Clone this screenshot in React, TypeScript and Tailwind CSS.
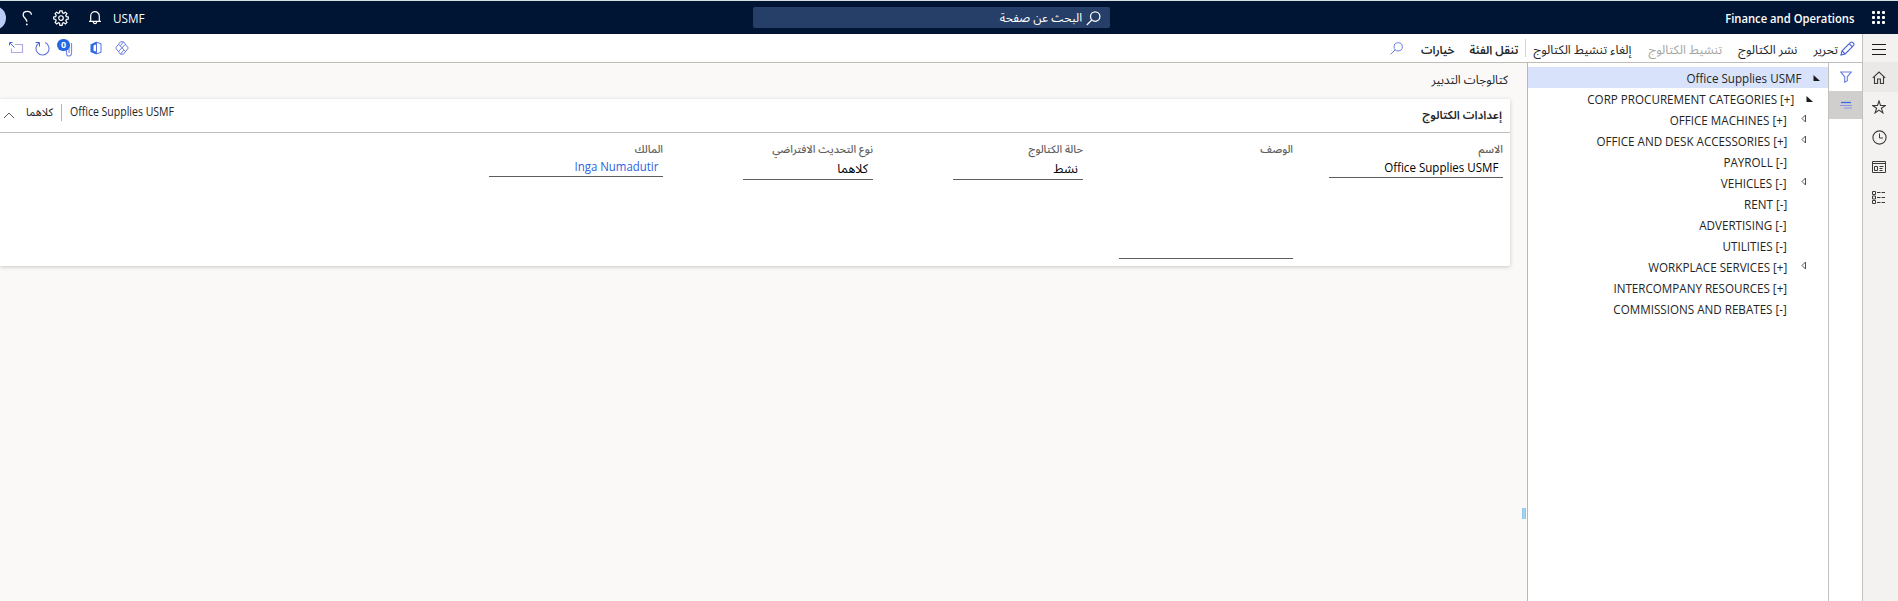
import React from "react";

type IconProps = { className?: string };

const Svg = ({ w, h, className = "", children }: { w: number; h: number; className?: string; children: React.ReactNode }) => (
  <svg width={w} height={h} viewBox={`0 0 ${w} ${h}`} fill="none" stroke="currentColor" strokeWidth={1} className={`block shrink-0 ${className}`}>
    {children}
  </svg>
);

const Waffle = () => (
  <Svg w={15} h={15}>
    {[1, 6, 11].map((y) => [1, 6, 11].map((x) => <rect key={`${x}-${y}`} x={x} y={y} width={3} height={3} rx={1} fill="#fff" stroke="none" />))}
  </Svg>
);

const SearchIcon = ({ className }: IconProps) => (
  <Svg w={15} h={15} className={className}>
    <circle cx={9.2} cy={5.6} r={4.7} strokeWidth={1.25} />
    <path d="M5.9 8.9 0.8 14" strokeWidth={1.25} />
  </Svg>
);

const ActionSearchIcon = () => (
  <Svg w={13} h={13}>
    <circle cx={8.2} cy={4.8} r={4.1} />
    <path d="M5.3 7.700.6 12.400" />
  </Svg>
);

const Question = () => (
  <Svg w={12} h={16}>
    <path d="M10.4 4.8C10.4 2.6 8.6 1.4 6.4 1.4S2.2 2.7 2.2 4.9c0 3 3.6 3.2 3.6 6.9" strokeWidth={1.3} />
    <circle cx={5.8} cy={14.4} r={0.9} fill="currentColor" stroke="none" />
  </Svg>
);

const Gear = () => (
  <Svg w={16} h={16}>
    <path d="M6.9.8h2.2l.4 2 1.2.5 1.7-1.1 1.5 1.5-1.1 1.7.5 1.2 2 .4v2.1l-2 .4-.5 1.2 1.1 1.7-1.5 1.5-1.7-1.1-1.2.5-.4 2H6.9l-.4-2-1.2-.5-1.7 1.1-1.5-1.5 1.1-1.7-.5-1.2-2-.4V7l2-.4.5-1.2L2.1 3.7l1.5-1.5 1.7 1.1 1.2-.5z" strokeWidth={1.2} />
    <circle cx={8} cy={8.05} r={2.3} strokeWidth={1.2} />
  </Svg>
);

const Bell = () => (
  <Svg w={14} h={15}>
    <path d="M2.7 11V6a4.3 4.3 0 0 1 8.6 0v5M1 11.3h12M5.3 11.8c.2 1.3.8 1.8 1.7 1.8s1.5-.5 1.7-1.8" strokeWidth={1.2} />
  </Svg>
);

const Pencil = () => (
  <Svg w={15} h={15}>
    <path d="M1 14l1.1-4.2 8.2-8.2c.8-.8 1.7-.8 2.5 0l.6.6c.8.8.8 1.7 0 2.5l-8.2 8.2zM2.2 9.9l2.9 2.9M9.2 2.7l3.1 3.1" strokeWidth={1.1} />
  </Svg>
);

const Popout = () => (
  <Svg w={15} h={12}>
    <path d="M6 2.500h7.500v8h-11V6.500" stroke="#b4a8e8" strokeWidth={1.2} />
    <path d="M1 1l4.500 4.500M.5 3.500v-3h3" stroke="#4a6fdc" />
  </Svg>
);

const Refresh = () => (
  <Svg w={15} h={15}>
    <path d="M4.100 2a6.500 6.500 0 1 0 6-.4" stroke="#6276de" strokeWidth={1.1} />
    <path d="M.5 1.500h4V5.500" stroke="#4a62d8" />
  </Svg>
);

const Clip = () => (
  <Svg w={8} h={14}>
    <path d="M6.500 0v10.500a2.500 2.500 0 0 1-5 0V3.500M4 3v7" stroke="#7d8de6" strokeWidth={1.2} />
  </Svg>
);

const Office = () => (
  <Svg w={12} h={14}>
    <path d="M.5 3.500 6.500.5v2.700L3.500 4.500v5.300l3 .9v2.800L.5 11z" fill="#2b6be4" stroke="none" />
    <path d="M6.500 1.300l4.500 1.400v8.600l-4.500 1.500M6.500 1v12" stroke="#4f73e2" />
  </Svg>
);

const Diamond = () => (
  <Svg w={14} h={14}>
    <path d="M5.500.8h3L13.300 7l-4.800 6.200h-3L.7 7zM3.700 3.300l6.900 7.400M10.300 3.300l-6.900 7.400M8.500.800 5.300 4.800M5.500 13.200l3.200-4" stroke="#5c6fdc" strokeWidth={0.9} />
  </Svg>
);

const Funnel = () => (
  <Svg w={12} h={12}>
    <path d="M.8 1h10.400L7.300 5.800v3.900L4.700 11.200V5.800z" stroke="#6b7fe0" strokeWidth={1.1} />
  </Svg>
);

const ListIcon = () => (
  <Svg w={12} h={8}>
    <path d="M1 1.500h10" stroke="#3b6be0" strokeWidth={1.3} />
    <path d="M0 4.500h12" stroke="#8c92e6" />
    <path d="M4 7h8" stroke="#8c92e6" />
  </Svg>
);

const Burger = () => (
  <Svg w={14} h={11}>
    <path d="M0 .5h14M0 5.500h14M0 10.500h14" stroke="#1b1b1b" />
  </Svg>
);

const Home = () => (
  <Svg w={14} h={13}>
    <path d="M.8 6.800 7 1l6.200 5.800M2.500 5.500v7h3.100V8h2.800v4.500h3.100v-7" strokeWidth={1.1} />
  </Svg>
);

const Star = () => (
  <Svg w={14} h={14}>
    <path d="M7 .9l1.500 4.600h4.800L9.400 8.300l1.500 4.600L7 10.100l-3.900 2.800 1.500-4.600L.7 5.500h4.800z" strokeWidth={1.1} />
  </Svg>
);

const Clock = () => (
  <Svg w={15} h={15}>
    <circle cx={7.5} cy={7.5} r={6.6} strokeWidth={1.1} />
    <path d="M7.500 3.500v4.500H11" />
  </Svg>
);

const Workspace = () => (
  <Svg w={14} h={12}>
    <path d="M.5.500h13v11H.5zM.5 2.500h13M2.500 5.500h3v4h-3zM7.500 5.500h4M7.500 7.500h3M7.500 9.500h3" />
  </Svg>
);

const Modules = () => (
  <Svg w={14} h={13}>
    <path d="M.5.500h3v3h-3zM.5 5h3v3h-3zM.5 9.500h3v3h-3z" />
    <path d="M5 1.500h9M5 6.500h9M5 11.500h9" strokeDasharray="3.500 1" />
  </Svg>
);

type Node = { label: string; level: number; mark?: "open" | "closed" };

const nodes: Node[] = [
  { label: "Office Supplies USMF", level: 0, mark: "open" },
  { label: "CORP PROCUREMENT CATEGORIES [+]", level: 1, mark: "open" },
  { label: "OFFICE MACHINES [+]", level: 2, mark: "closed" },
  { label: "OFFICE AND DESK ACCESSORIES [+]", level: 2, mark: "closed" },
  { label: "PAYROLL [-]", level: 2 },
  { label: "VEHICLES [-]", level: 2, mark: "closed" },
  { label: "RENT [-]", level: 2 },
  { label: "ADVERTISING [-]", level: 2 },
  { label: "UTILITIES [-]", level: 2 },
  { label: "WORKPLACE SERVICES [+]", level: 2, mark: "closed" },
  { label: "INTERCOMPANY RESOURCES [+]", level: 2 },
  { label: "COMMISSIONS AND REBATES [-]", level: 2 },
];

const indent = ["pr-[6px]", "pr-[13px]", "pr-[20px]"];

const TreeRow = ({ label, level, mark }: Node) => (
  <li className={`flex h-[21px] items-center ${indent[level]} ${level === 0 ? "bg-[#d8e3fb]" : ""}`}>
    <span className="flex w-[21px] shrink-0">
      {mark === "open" && (
        <Svg w={7} h={6} className="mr-[2px]">
          <path d="M.5 0v6h6.500z" fill="#1b1b1b" stroke="none" />
        </Svg>
      )}
      {mark === "closed" && (
        <Svg w={6} h={9} className="mr-px mb-[2px]">
          <path d="M4.500 1v7L1 4.500z" stroke="#4a565f" />
        </Svg>
      )}
    </span>
    <bdi dir="ltr" className="inline-block origin-right scale-x-[0.895] pt-[2px] text-[13px] leading-[19px] whitespace-nowrap">{label}</bdi>
  </li>
);

const Field = ({ label, children, line }: { label: string; children?: React.ReactNode; line: string }) => (
  <div className="w-[174px]">
    <div className="h-[17px] text-[10.800px] leading-[19px] font-medium text-[#605e5c]">{label}</div>
    <div className={`border-b border-[#605e5c] pr-[5px] text-[12.500px] whitespace-nowrap text-black ${line}`}>{children}</div>
  </div>
);

export default function App() {
  return (
    <div dir="rtl" className="flex h-[601px] w-[1898px] flex-col overflow-hidden bg-[#faf9f8] font-['Open_Sans','Noto_Sans_Arabic','Noto_Sans',sans-serif] text-[#242424]">
      <header className="flex h-[34px] shrink-0 items-center border-t border-[#d5dfe0] bg-[#001433] text-white">
        <div className="flex w-[788px] items-center pr-[12px]">
          <Waffle />
          <span dir="ltr" className="mr-[17px] inline-block origin-right scale-x-[0.865] pt-[2px] text-[13px] font-semibold">Finance and Operations</span>
        </div>
        <div className="flex h-[21px] w-[357px] items-center rounded-[2px] bg-[#263f68] pr-[9px] text-[12px]">
          <SearchIcon className="mt-[2px]" />
          <span className="mr-[4px] pt-px">البحث عن صفحة</span>
        </div>
        <div className="flex flex-1 items-center justify-end">
          <span className="inline-block origin-left scale-x-[0.9] pt-[2px] text-[13px]">USMF</span>
          <span className="mr-[11px]"><Bell /></span>
          <span className="mr-[19px]"><Gear /></span>
          <span className="mr-[20px]"><Question /></span>
          <div className="mr-[15px] flex w-[6px] overflow-hidden">
            <div className="h-[24px] w-[24px] shrink-0 rounded-full bg-[#b9cdf6]" />
          </div>
        </div>
      </header>

      <div className="flex flex-1">
        <nav className="flex w-[36px] shrink-0 flex-col border-l border-[#c3c1bf] bg-[#f3f2f1] text-[#3b3a39]">
          <div className="flex h-[28px] items-center justify-center pt-[3px] pr-[3px]"><Burger /></div>
          <div className="flex h-[30px] items-center justify-center bg-[#eae9e8] pr-[3px]"><Home /></div>
          <div className="flex h-[30px] items-center justify-center pr-[3px]"><Star /></div>
          <div className="flex h-[30px] items-center justify-center pr-[2px]"><Clock /></div>
          <div className="flex h-[30px] items-center justify-center pr-[3px]"><Workspace /></div>
          <div className="flex h-[30px] items-center justify-center pr-[3px]"><Modules /></div>
        </nav>

        <div className="flex min-w-0 flex-1 flex-col">
          <div className="flex h-[29px] shrink-0 items-center border-b border-[#c0bcb8] bg-white pr-[7px] text-[12.300px] whitespace-nowrap">
            <span className="text-[#4560d4]"><Pencil /></span>
            <span className="mr-[2px] pt-[4px]">تحرير</span>
            <span className="mr-[16px] pt-[4px]">نشر الكتالوج</span>
            <span className="mr-[16px] pt-[4px] text-[#a6a4a2]">تنشيط الكتالوج</span>
            <span className="mr-[17px] pt-[4px]">إلغاء تنشيط الكتالوج</span>
            <span className="mr-[7px] h-[18px] w-px bg-[#d6d4d2]" />
            <span className="mr-[7px] pt-[4px] text-[11.600px] font-semibold">تنقل الفئة</span>
            <span className="mr-[15px] pt-[4px] text-[11.400px] font-semibold">خيارات</span>
            <span className="mr-[18px] text-[#6b7fe0]"><ActionSearchIcon /></span>
            <div className="flex flex-1 items-center justify-end pl-[9px]">
              <Diamond />
              <span className="mr-[13px]"><Office /></span>
              <div className="relative mr-[17px] h-[16px] w-[16px]">
                <span className="absolute top-[3px] right-0"><Clip /></span>
                <span className="absolute top-[-1px] left-0 flex h-[12px] w-[13px] items-center justify-center rounded-full bg-[#2266e3] text-[9px] font-bold text-white">0</span>
              </div>
              <span className="mr-[7px]"><Refresh /></span>
              <span className="mr-[11px]"><Popout /></span>
            </div>
          </div>

          <div className="flex flex-1">
            <div className="flex w-[34px] shrink-0 flex-col border-l border-[#c3c1bf] bg-white">
              <div className="flex h-[28px] items-center justify-center"><Funnel /></div>
              <div className="flex h-[28px] items-center justify-center bg-[#d0cfcd]"><ListIcon /></div>
            </div>
            <ul className="w-[301px] shrink-0 border-l border-[#b9b8b6] bg-white pt-[4px]">
              {nodes.map((n) => <TreeRow key={n.label} {...n} />)}
            </ul>
            <div className="flex w-[5px] shrink-0 items-start pt-[445px]">
              <span className="mr-px h-[11px] w-[4px] border-x border-[#8cc8ee] bg-[#a9d2ea]" />
            </div>

            <main className="flex flex-1 flex-col">
              <h1 className="mr-[14px] h-[36px] pt-[7px] text-[12px] leading-[19px]">كتالوجات التدبير</h1>
              <section className="mr-[12px] h-[167px] rounded-r-[2px] bg-white shadow-[0_1px_4px_rgba(0,0,0,0.2)]">
                <div className="flex h-[34px] items-center justify-between border-b border-[#c0bebc] pr-[8px] pl-[3px]">
                  <h2 className="pb-[2px] text-[11.600px] font-semibold">إعدادات الكتالوج</h2>
                  <div className="mb-[7px] flex w-[171px] items-center text-[11px]">
                    <span dir="ltr" className="inline-block w-[104px] whitespace-nowrap">
                      <span className="inline-block origin-left scale-x-[0.877] text-[12px]">Office Supplies USMF</span>
                    </span>
                    <span className="mr-[8px] h-[17px] w-px bg-[#b5b3b1]" />
                    <span className="mr-[8px]">كلاهما</span>
                    <Svg w={12} h={7} className="mt-[6px] mr-[11px]"><path d="M1 6l5-5 5 5" stroke="#605e5c" /></Svg>
                  </div>
                </div>
                <div className="flex gap-[36px] pt-[6px] pr-[7px]">
                  <Field label="الاسم" line="h-[22px] pt-[2px]"><span dir="ltr" className="inline-block origin-right scale-x-[0.89] text-[13px]">Office Supplies USMF</span></Field>
                  <Field label="الوصف" line="h-[103px]" />
                  <Field label="حالة الكتالوج" line="h-[24px] w-[130px] pt-[4px]">نشط</Field>
                  <Field label="نوع التحديث الافتراضي" line="h-[24px] w-[130px] pt-[4px]">كلاهما</Field>
                  <Field label="المالك" line="h-[21px] pt-px"><span dir="ltr" className="inline-block origin-right scale-x-[0.88] text-[13px] text-[#2b63e0]">Inga Numadutir</span></Field>
                </div>
              </section>
            </main>
          </div>
        </div>
      </div>
    </div>
  );
}
